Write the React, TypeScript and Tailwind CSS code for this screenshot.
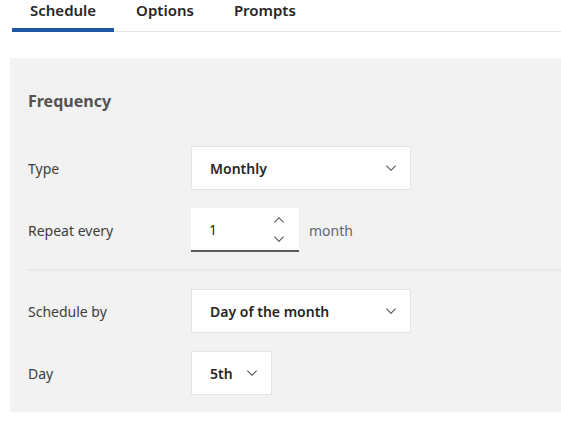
import { ReactNode } from 'react';

const font = { fontFamily: '"Noto Sans", "Open Sans", sans-serif' };

function Chevron({ up = false }: { up?: boolean }) {
  return (
    <svg
      width="16"
      height="16"
      viewBox="0 0 32 32"
      fill="#525252"
      className={up ? 'rotate-180' : ''}
    >
      <path d="M16 22L6 12l1.4-1.4L16 19.2l8.6-8.6L26 12z" />
    </svg>
  );
}

function Select({ value, width }: { value: string; width: string }) {
  return (
    <div
      className={`${width} h-[44px] bg-white border border-[#e4e4e4] flex items-center justify-between pl-[18px] pr-[11px]`}
    >
      <span className="text-[14px] font-semibold text-[#262626]">{value}</span>
      <Chevron />
    </div>
  );
}

function Row({ label, children }: { label: string; children: ReactNode }) {
  return (
    <div className="flex items-center">
      <div className="w-[163px] text-[14px] text-[#3d3d3d]">{label}</div>
      {children}
    </div>
  );
}

export default function App() {
  const tabs = ['Schedule', 'Options', 'Prompts'];

  return (
    <div className="w-[561px] h-[425px] bg-white overflow-hidden" style={font}>
      <div className="ml-[12px] flex gap-1 border-b border-[#e4e4e4]">
        {tabs.map((tab, i) => (
          <div
            key={tab}
            className={`px-[18px] pb-[8px] leading-5 text-[15px] font-semibold text-[#262626] border-b-4 -mb-px ${
              i === 0 ? 'border-[#1f57a4]' : 'border-transparent'
            }`}
          >
            {tab}
          </div>
        ))}
      </div>

      <div className="ml-[10px] mt-[26px] h-[354px] bg-[#f2f2f2] pt-[31px]">
        <h2 className="pl-[18px] text-[16px] leading-6 font-bold text-[#525252]">Frequency</h2>

        <div className="mt-[33px] pl-[18px] flex flex-col gap-[18px]">
          <Row label="Type">
            <Select value="Monthly" width="w-[220px]" />
          </Row>
          <Row label="Repeat every">
            <div className="w-[108px] h-[44px] bg-white border-b-2 border-[#5a5a5a] flex items-center justify-between pl-[18px] pr-[12px]">
              <span className="text-[14px] text-[#262626]">1</span>
              <div className="flex flex-col gap-[3px]">
                <Chevron up />
                <Chevron />
              </div>
            </div>
            <span className="ml-[10px] text-[14px] text-[#5f6670]">month</span>
          </Row>
        </div>

        <div className="ml-[16px] mt-[17px] h-[2px] bg-[#e8e8e8]" />

        <div className="mt-[18px] pl-[18px] flex flex-col gap-[18px]">
          <Row label="Schedule by">
            <Select value="Day of the month" width="w-[220px]" />
          </Row>
          <Row label="Day">
            <Select value="5th" width="w-[81px]" />
          </Row>
        </div>
      </div>
    </div>
  );
}
